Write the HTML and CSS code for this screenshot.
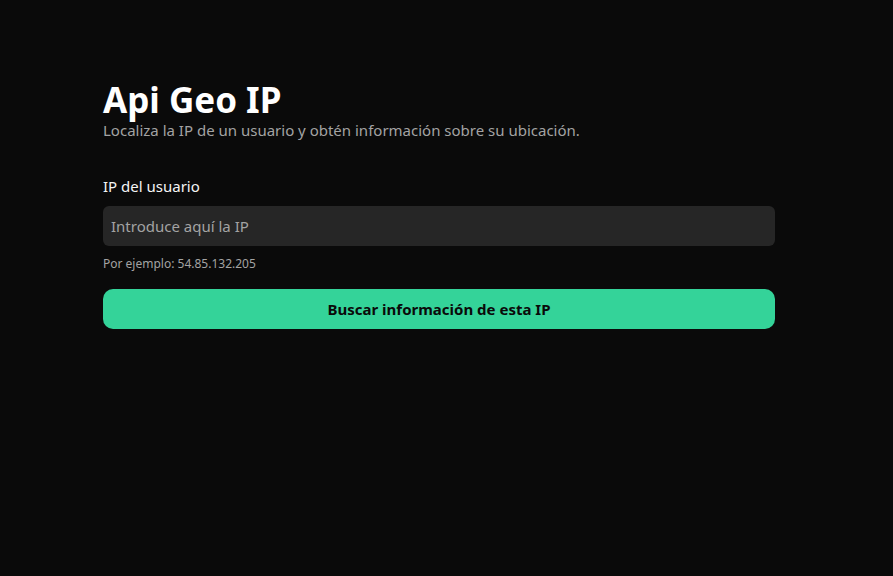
FILE: index.html
```html
<!DOCTYPE html>
<html lang="es">
<head>
<meta charset="utf-8">
<title>Api Geo IP</title>
<link rel="stylesheet" href="styles.css">
</head>
<body>
<main class="container">
  <header class="header">
    <h1 class="title">Api Geo IP</h1>
    <p class="subtitle">Localiza la IP de un usuario y obtén información sobre su ubicación.</p>
  </header>
  <form class="form">
    <label class="label" for="ip">IP del usuario</label>
    <input class="input" id="ip" type="text" placeholder="Introduce aquí la IP">
    <p class="hint">Por ejemplo: 54.85.132.205</p>
    <button class="button" type="button">Buscar información de esta IP</button>
  </form>
</main>
</body>
</html>
```
FILE: styles.css
```css
* { box-sizing: border-box; }
html, body { margin: 0; padding: 0; }
body {
  background: #0a0a0a;
  color: #ffffff;
  font-family: "Noto Sans", "Open Sans", sans-serif;
  min-height: 576px;
}
.container {
  width: 672px;
  margin-left: 103px;
  padding-top: 80px;
}
.title {
  margin: 0;
  font-size: 35px;
  line-height: 40px;
  font-weight: 700;
  color: #ffffff;
}
.subtitle {
  margin: 0;
  font-size: 15px;
  line-height: 20px;
  color: #a3a3a3;
}
.form {
  display: flex;
  flex-direction: column;
  margin-top: 36px;
}
.label {
  font-size: 15px;
  line-height: 20px;
  color: #f5f5f5;
  margin-bottom: 10px;
}
.input {
  height: 40px;
  border: none;
  border-radius: 6px;
  background: #262626;
  color: #fff;
  font-family: inherit;
  font-size: 15px;
  padding: 0 8px;
  outline: none;
}
.input::placeholder { color: #a3a3a3; }
.hint {
  margin: 10px 0 0;
  font-size: 12px;
  line-height: 16px;
  color: #a3a3a3;
}
.button {
  margin-top: 17px;
  height: 40px;
  border: none;
  border-radius: 10px;
  background: #34d399;
  color: #0a0a0a;
  font-family: inherit;
  font-size: 15px;
  font-weight: 700;
}
```
